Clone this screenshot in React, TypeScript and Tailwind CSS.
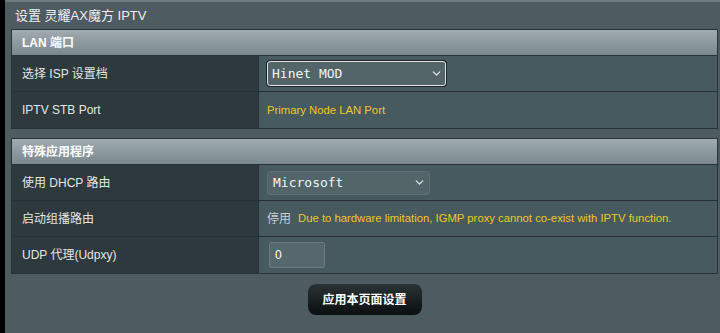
import { ChevronDown } from 'lucide-react'

const sans = "font-['Liberation_Sans','Noto_Sans_CJK_SC',sans-serif]"
const mono = "font-['DejaVu_Sans_Mono','Noto_Sans_CJK_SC',monospace]"

function SectionHeader({ title }: { title: string }) {
  return (
    <div className="h-[26px] flex items-center px-[10px] bg-gradient-to-b from-[#a0abb0] to-[#7b898e] border-b border-[#2a3438] text-[12px] font-bold text-white">
      {title}
    </div>
  )
}

function Row({ label, children, last }: { label: string; children: React.ReactNode; last?: boolean }) {
  return (
    <div className={`flex h-[36px] ${last ? '' : 'border-b border-[#283236]'}`}>
      <div className="w-[247px] shrink-0 flex items-center px-[10px] bg-[#2d393d] border-r border-[#283236] text-[12px] text-[#e4e6e7]">
        {label}
      </div>
      <div className="flex-1 flex items-center px-[8px] bg-[#475a5f] text-[11.3px]">{children}</div>
    </div>
  )
}

export default function App() {
  return (
    <div className={`h-[333px] w-[720px] bg-black pl-[5px] overflow-hidden ${sans}`}>
      <div className="h-full bg-[#4e5b60] border-t-2 border-[#6f7a7e] pl-[6px] pr-[2px]">
        <div className="h-[27px] flex items-center pl-[4px] text-[13px] text-[#eef0f0]">设置 灵耀AX魔方 IPTV</div>

        {/* LAN 端口 */}
        <div className="border border-[#2a3438]">
          <SectionHeader title="LAN 端口" />
          <Row label="选择 ISP 设置档">
            <div className="w-[179px] h-[25px] rounded-[3px] border border-[#dfe3e4] ring-1 ring-[#1d2528] bg-[#536569] flex items-center justify-between pl-[4px] pr-[2px]">
              <span className={`${mono} text-[13px] text-[#f2f4f4]`}>Hinet MOD</span>
              <ChevronDown className="w-[13px] h-[13px] text-[#e4e8e9]" strokeWidth={2.2} />
            </div>
          </Row>
          <Row label="IPTV STB Port" last>
            <span className="text-[#f0c722]">Primary Node LAN Port</span>
          </Row>
        </div>

        {/* 特殊应用程序 */}
        <div className="mt-[9px] border border-[#2a3438]">
          <SectionHeader title="特殊应用程序" />
          <Row label="使用 DHCP 路由">
            <div className="w-[163px] h-[24px] rounded-[3px] border border-[#5d6f74] bg-[#536569] flex items-center justify-between pl-[5px] pr-[3px]">
              <span className={`${mono} text-[13px] text-[#f2f4f4]`}>Microsoft</span>
              <ChevronDown className="w-[13px] h-[13px] text-[#e4e8e9]" strokeWidth={2.2} />
            </div>
          </Row>
          <Row label="启动组播路由">
            <span className="text-[#c9cfd1] text-[12px]">停用</span>
            <span className="ml-[7px] text-[#f0c722]">
              Due to hardware limitation, IGMP proxy cannot co-exist with IPTV function.
            </span>
          </Row>
          <Row label="UDP 代理(Udpxy)" last>
            <div className="ml-[2px] w-[56px] h-[26px] rounded-[2px] border border-[#6a7b80] bg-[#56686d] flex items-center px-[5px] text-[12px] text-white">
              0
            </div>
          </Row>
        </div>

        <div className="flex justify-center mt-[10px]">
          <button className="w-[114px] h-[31px] rounded-[8px] bg-gradient-to-b from-[#2a3336] to-[#0b0f10] text-[12px] font-bold text-white">
            应用本页面设置
          </button>
        </div>
      </div>
    </div>
  )
}
